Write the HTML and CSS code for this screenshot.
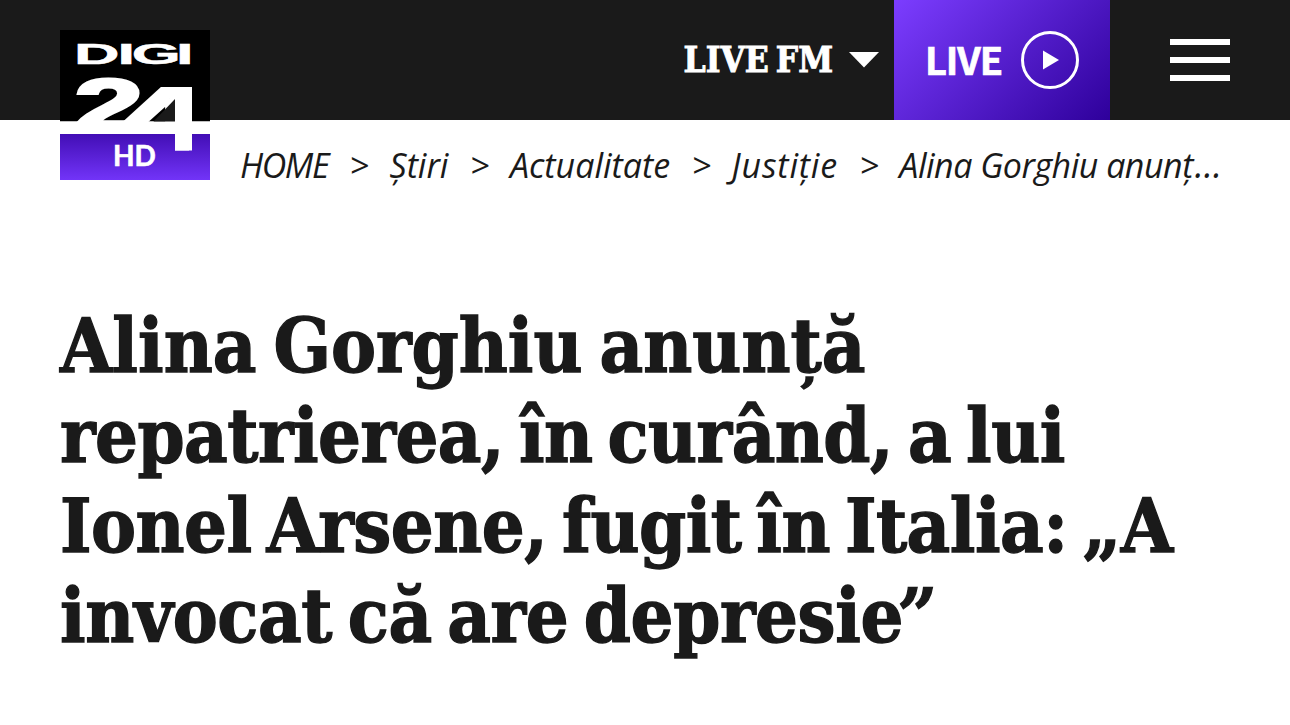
FILE: index.html
```html
<!DOCTYPE html>
<html lang="ro">
<head>
<meta charset="utf-8">
<title>Digi24</title>
<link rel="stylesheet" href="styles.css">
</head>
<body>
<header class="header">
  <a class="logo" aria-label="Digi24 HD">
    <svg width="150" height="150" viewBox="60 30 150 150">
      <defs>
        <linearGradient id="hd" x1="0" y1="0" x2="0" y2="1"><stop offset="0" stop-color="#420eb5"/><stop offset="1" stop-color="#7234f8"/></linearGradient>
        <clipPath id="digits"><path d="M70 70H150V87H192V150.500H175V134H70Z"/></clipPath>
      </defs>
      <rect x="60" y="30" width="150" height="91.500" fill="#000"/>
      <rect x="60" y="121.500" width="150" height="13" fill="#fff"/>
      <rect x="60" y="134" width="150" height="46" fill="url(#hd)"/>
      <g class="logo-type">
        <text class="logo-name" transform="scale(2.1 1)" x="35.200 55.9 62.700 83.800" y="64.500" font-size="30">DIGI</text>
        <g clip-path="url(#digits)"><text transform="scale(1.7 1)"><tspan class="two" x="43.700" y="130" font-size="73">2</tspan><tspan class="four" x="69" y="151" font-size="92">4</tspan></text></g>
      </g>
      <path d="M153.500 121.500L175 99V121.500Z" fill="#1a1a1a"/>
      <text class="logo-hd" x="113" y="166">HD</text>
    </svg>
  </a>
  <nav class="actions">
    <a class="fm"><span class="fm-label">LIVE FM</span><svg width="30" height="16" viewBox="0 0 30 16"><path d="M0 0H30L15 15.500Z" fill="#fff"/></svg></a>
    <a class="live"><span class="live-label">LIVE</span><svg width="58" height="58" viewBox="0 0 58 58"><circle cx="29" cy="29" r="27.500" fill="none" stroke="#fff" stroke-width="3"/><path d="M22 19.500L38 29L22 38.500Z" fill="#fff"/></svg></a>
    <a class="menu"><i></i><i></i><i></i></a>
  </nav>
</header>
<nav class="crumbs"><a class="home">HOME</a><b>&gt;</b><a>Știri</a><b>&gt;</b><a>Actualitate</a><b>&gt;</b><a class="wide">Justiție</a><b>&gt;</b><a class="current">Alina Gorghiu anunț<span class="more">…</span></a></nav>
<main class="article">
  <h1 class="title"><span class="l1">Alina Gorghiu anunță</span> <span class="l2">repatrierea, în curând, a lui</span> <span class="l3">Ionel Arsene, fugit în Italia: „A</span> <span class="l4">invocat că are depresie<span class="quote">”</span></span></h1>
</main>
</body>
</html>
```
FILE: styles.css
```css
* { box-sizing: border-box; }
body { margin: 0; background: #fff; color: #1a1a1a; overflow: hidden; }
.header { height: 120px; padding-left: 60px; background: #1a1a1a; display: flex; justify-content: space-between; }
.logo { width: 150px; height: 150px; margin-top: 30px; }
.logo svg { display: block; overflow: visible; }
.logo-type { fill: #fff; stroke: #fff; font-family: "Liberation Sans", sans-serif; font-weight: 700; }
.logo-name { stroke-width: 0.5px; }
.two { stroke-width: 3px; }
.four { stroke-width: 4px; }
.logo-hd { fill: #fff; stroke: #fff; stroke-width: 0.6px; font: 700 28px Lato, sans-serif; }
.actions { display: flex; color: #fff; }
.fm { display: flex; align-items: center; gap: 16px; margin-right: 15px; }
.fm-label { font: 700 35px/40px "DejaVu Serif Condensed", "DejaVu Serif", serif; word-spacing: -4px; -webkit-text-stroke: 0.9px #fff; }
.live { width: 216px; padding-right: 31px; display: flex; align-items: center; justify-content: flex-end; gap: 19px; background: linear-gradient(135deg, #7c3dff, #2e009b); }
.live-label { padding-bottom: 2px; font: 700 38px/50px "Noto Sans CJK SC", sans-serif; letter-spacing: -1.1px; -webkit-text-stroke: 0.7px #fff; }
.menu { width: 180px; display: flex; flex-direction: column; align-items: center; justify-content: center; gap: 12px; }
.menu i { width: 60px; height: 6px; background: #fff; }
.crumbs { height: 90px; padding-left: 240px; display: flex; align-items: center; font: italic 34px/44px "Open Sans", sans-serif; white-space: nowrap; }
.crumbs b { font-weight: 400; margin: 0 20.5px 0 21.5px; }
.crumbs .home { letter-spacing: -1.4px; }
.crumbs .wide { letter-spacing: 0.8px; }
.crumbs .current { letter-spacing: -0.5px; }
.crumbs .more { margin-left: 2px; font-size: 36px; line-height: 0; }
.article { padding: 91px 60px 0; }
.title { margin: 0; font: 700 75px/90px "DejaVu Serif Condensed", "DejaVu Serif", serif; -webkit-text-stroke: 1.3px #1a1a1a; }
.title > span { display: block; width: max-content; white-space: nowrap; }
.l1 { word-spacing: -6.5px; }
.l2 { letter-spacing: -0.53px; word-spacing: -8px; }
.l3 { letter-spacing: -0.53px; word-spacing: -8px; }
.l4 { letter-spacing: -0.4px; word-spacing: -7.5px; }
.quote { display: inline-block; margin-left: -7px; transform: skewX(-6deg); }
```
